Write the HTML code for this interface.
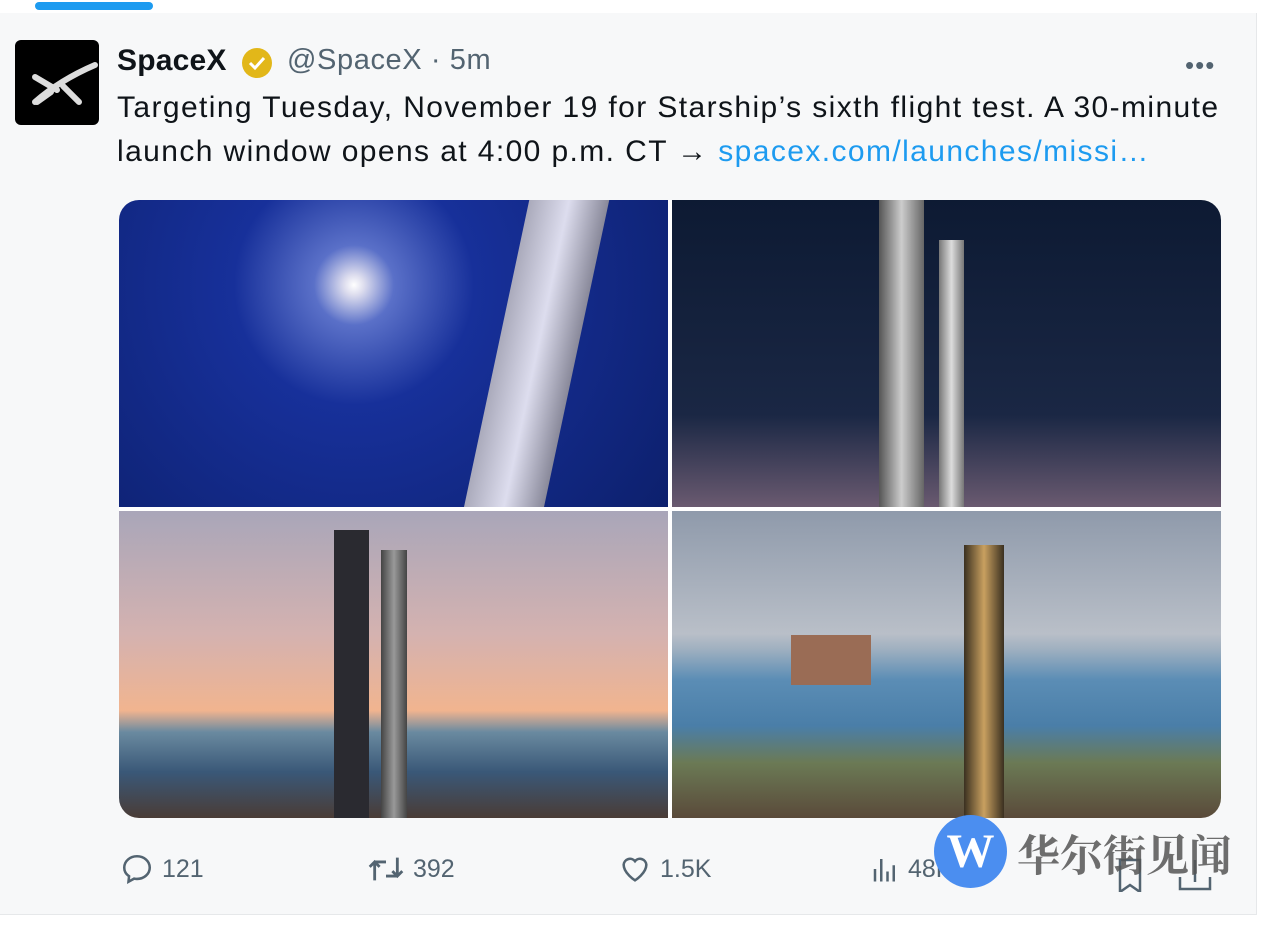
<!DOCTYPE html>
<html><head><meta charset="utf-8"><style>
*{margin:0;padding:0;box-sizing:border-box}
body{width:1280px;height:925px;background:#fff;font-family:"Liberation Sans","Noto Sans CJK SC",sans-serif;position:relative;overflow:hidden}
.card{position:absolute;left:0;top:13px;width:1257px;height:902px;background:#f7f8f9;border-right:1px solid #e6e8ea;border-bottom:1px solid #e6e8ea}
.bar{position:absolute;left:35px;top:2px;width:118px;height:8px;border-radius:4px;background:#1d9bf0}
.av{position:absolute;left:15px;top:40px;width:84px;height:85px;background:#000;border-radius:6px}
.name{position:absolute;left:117px;top:44px;font-size:30px;font-weight:bold;color:#0f1419;letter-spacing:.2px}
.handle{position:absolute;left:287px;top:44px;font-size:29px;color:#536471;letter-spacing:.6px}
.txt{position:absolute;left:117px;top:86px;font-size:30px;line-height:44px;color:#0f1419;letter-spacing:1.4px;white-space:nowrap}
.txt a{color:#1d9bf0;text-decoration:none}
.dots{position:absolute;left:1185px;top:50px;font-size:26px;color:#536471;letter-spacing:1px}
.grid{position:absolute;left:119px;top:200px;width:1102px;height:618px;border-radius:20px;overflow:hidden;background:#fff}
.g{position:absolute}
.act{position:absolute;top:852px;font-size:25px;color:#536471;display:flex;align-items:center;gap:8px}
</style></head><body>
<div class="bar"></div>
<div class="card"></div>
<div class="av"><svg width="84" height="85" viewBox="0 0 84 85"><path d="M20 37 L42 50 M20 62 Q45 40 80 25" stroke="#ddd" stroke-width="6" fill="none" stroke-linecap="round"/><path d="M22 62 L36 52 M48 46 L64 62" stroke="#ddd" stroke-width="6" stroke-linecap="round"/></svg></div>
<div class="name">SpaceX</div>
<svg style="position:absolute;left:240px;top:46px" width="34" height="34" viewBox="0 0 34 34"><circle cx="17" cy="17" r="15" fill="#e2b719"/><path d="M10 17l5 5 9-10" stroke="#fff" stroke-width="3" fill="none"/></svg>
<div class="handle">@SpaceX · 5m</div>
<div class="dots">•••</div>
<div class="txt">Targeting Tuesday, November 19 for Starship’s sixth flight test. A 30-minute<br>launch window opens at 4:00 p.m. CT → <a>spacex.com/launches/missi…</a></div>
<div class="grid">
<div class="g" style="left:0;top:0;width:549px;height:307px;background:radial-gradient(circle at 235px 85px,#fff 0,#dde 10px,#5a70c8 40px,#17309a 120px,#0c1f6a 400px)"></div>
<div class="g" style="left:345px;top:0;width:80px;height:307px;background:linear-gradient(90deg,#aab,#dde,#889);transform:skewX(-12deg);transform-origin:bottom"></div>
<div class="g" style="left:553px;top:0;width:549px;height:307px;background:linear-gradient(180deg,#0d1a33,#1a2744 70%,#6a5a70)"></div>
<div class="g" style="left:760px;top:0;width:45px;height:307px;background:linear-gradient(90deg,#555,#ccc,#666)"></div>
<div class="g" style="left:820px;top:40px;width:25px;height:267px;background:linear-gradient(90deg,#777,#ddd,#777)"></div>
<div class="g" style="left:0;top:311px;width:549px;height:307px;background:linear-gradient(180deg,#a9a6b9,#d4b2b0 40%,#f1b48f 65%,#6a8aa0 72%,#3a5878 85%,#4a3c36)"></div>
<div class="g" style="left:215px;top:330px;width:35px;height:288px;background:#2a2a30"></div>
<div class="g" style="left:262px;top:350px;width:26px;height:268px;background:linear-gradient(90deg,#444,#999,#444)"></div>
<div class="g" style="left:553px;top:311px;width:549px;height:307px;background:linear-gradient(180deg,#8f9aab,#b9bfc8 40%,#9fb0c0 45%,#5b8db5 55%,#4a7ea8 70%,#6b7a55 82%,#5a4a3a)"></div>
<div class="g" style="left:672px;top:435px;width:80px;height:50px;background:#9a6c55"></div>
<div class="g" style="left:845px;top:345px;width:40px;height:273px;background:linear-gradient(90deg,#3a3020,#c9a060,#3a3020)"></div>
<div class="g" style="left:549px;top:0;width:4px;height:618px;background:#fff"></div>
<div class="g" style="left:0;top:307px;width:1102px;height:4px;background:#fff"></div>
</div>
<div class="act" style="left:120px"><svg width="34" height="34" viewBox="0 0 24 24"><path d="M12 3C7 3 3 6.5 3 11c0 2.5 1.3 4.7 3.4 6.1L6 21l4-2.2c.6.1 1.3.2 2 .2 5 0 9-3.5 9-8s-4-8-9-8z" fill="none" stroke="#536471" stroke-width="1.8"/></svg>121</div>
<div class="act" style="left:367px"><svg width="38" height="34" viewBox="0 0 26 24"><path d="M5 20V7M1.5 10.5 5 7l3.5 3.5M5 7h8M21 4v13M17.5 13.5 21 17l3.5-3.5M21 17h-8" fill="none" stroke="#536471" stroke-width="2"/></svg>392</div>
<div class="act" style="left:618px"><svg width="34" height="34" viewBox="0 0 24 24"><path d="M12 20s-8-5-8-11a4.5 4.5 0 0 1 8-2.5A4.5 4.5 0 0 1 20 9c0 6-8 11-8 11z" fill="none" stroke="#536471" stroke-width="1.8"/></svg>1.5K</div>
<div class="act" style="left:870px"><svg width="30" height="34" viewBox="0 0 24 24"><path d="M4 22V12M9 22V4M14 22V14M19 22V9" stroke="#536471" stroke-width="2"/></svg>48K</div>
<svg style="position:absolute;left:1110px;top:852px" width="130" height="40" viewBox="0 0 130 40"><path d="M10 8v32l10-7 10 7V8z M70 25v12h30V25 M85 8v22" fill="none" stroke="#536471" stroke-width="2.5"/></svg>
<div style="position:absolute;left:934px;top:815px;width:73px;height:73px;border-radius:50%;background:#4b8ef0;color:#fff;font:bold 48px 'Liberation Serif',serif;text-align:center;line-height:73px">W</div>
<div style="position:absolute;left:1017px;top:823px;font-size:43px;font-weight:bold;color:#555;font-family:'Noto Serif CJK SC','Noto Sans CJK SC',serif;opacity:.85">华尔街见闻</div>
</body></html>
